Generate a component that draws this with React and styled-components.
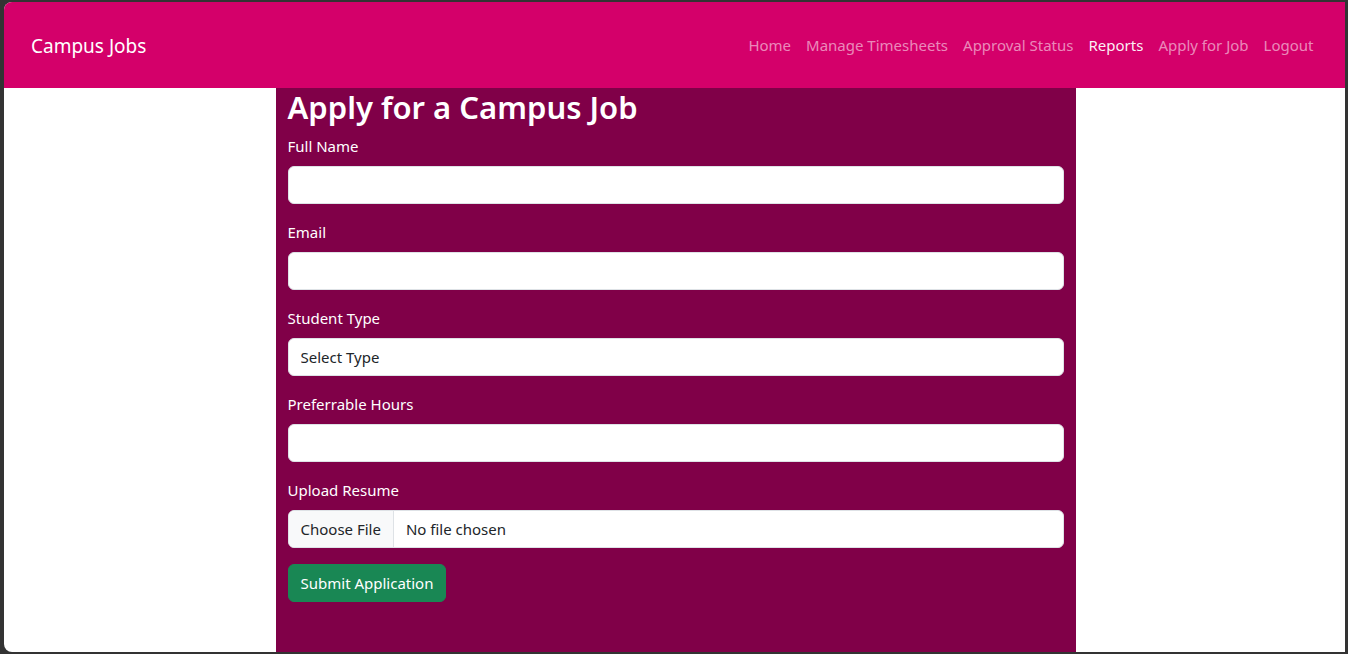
import React from "react";
import styled, { createGlobalStyle } from "styled-components";

const Global = createGlobalStyle`
  html, body { margin: 0; height: 100%; }
  body {
    background: #333;
    font-family: "Noto Sans", "Open Sans", sans-serif;
    font-size: 16px;
    color: #212529;
  }
  #root { height: 100%; }
  * { box-sizing: border-box; }
`;

const Frame = styled.div`
  height: calc(100vh - 4px);
  margin: 2px 3px 2px 4px;
  border-radius: 8px 0 0 8px;
  overflow: hidden;
  background: #fff;
  display: flex;
  flex-direction: column;
`;

const Navbar = styled.nav`
  height: 86px;
  flex: none;
  background: #d4006a;
  display: flex;
  align-items: center;
  justify-content: space-between;
  padding: 0 24px 0 27px;
`;

const Brand = styled.a`
  color: #fff;
  font-size: 19px;
  text-decoration: none;
  margin-top: 2px;
`;

const NavList = styled.ul`
  list-style: none;
  margin: 0;
  padding: 0;
  display: flex;
`;

const NavLink = styled.a`
  display: block;
  padding: 8px 7.5px;
  font-size: 15px;
  color: ${p => (p.$active ? "rgba(255,255,255,.95)" : "rgba(255,255,255,.55)")};
  text-decoration: none;
`;

const Main = styled.main`
  flex: 1;
  display: flex;
  justify-content: center;
  padding-left: 2px;
`;

const Panel = styled.div`
  width: 800px;
  background: #800048;
  padding: 0 12px;
`;

const Title = styled.h2`
  margin: 0 0 8px;
  padding-top: 1px;
  font-size: 31px;
  font-weight: 600;
  line-height: 37px;
  color: #fff;
`;

const Group = styled.div`
  margin-bottom: 16px;
`;

const Label = styled.label`
  display: block;
  color: #fff;
  font-size: 15px;
  line-height: 24px;
  margin-bottom: 8px;
`;

const Input = styled.input`
  display: block;
  width: 100%;
  height: 38px;
  padding: 6px 12px;
  font: inherit;
  font-size: 15px;
  color: #212529;
  background: #fff;
  border: 1px solid #dee2e6;
  border-radius: 6px;
  outline: none;
`;

const Select = styled.select`
  display: block;
  width: 100%;
  height: 38px;
  padding: 6px 12px;
  font: inherit;
  font-size: 15px;
  color: #212529;
  background: #fff;
  border: 1px solid #dee2e6;
  border-radius: 6px;
  appearance: none;
  outline: none;
`;

const FileBox = styled.div`
  display: flex;
  height: 38px;
  background: #fff;
  border: 1px solid #dee2e6;
  border-radius: 6px;
  overflow: hidden;
  font-size: 15px;
`;

const FileButton = styled.span`
  display: flex;
  align-items: center;
  padding: 0 12px;
  background: #f8f9fa;
  border-right: 1px solid #dee2e6;
  color: #212529;
`;

const FileName = styled.span`
  display: flex;
  align-items: center;
  padding: 0 12px;
  color: #212529;
`;

const Submit = styled.button`
  height: 38px;
  padding: 0 12px;
  font: inherit;
  font-size: 15px;
  color: #fff;
  background: #198754;
  border: 1px solid #198754;
  border-radius: 6px;
`;

const links = ["Home", "Manage Timesheets", "Approval Status", "Reports", "Apply for Job", "Logout"];

export default function App() {
  return (
    <>
      <Global />
      <Frame>
        <Navbar>
          <Brand href="#">Campus Jobs</Brand>
          <NavList>
            {links.map(l => (
              <li key={l}>
                <NavLink href="#" $active={l === "Reports"}>{l}</NavLink>
              </li>
            ))}
          </NavList>
        </Navbar>
        <Main>
          <Panel>
            <Title>Apply for a Campus Job</Title>
            <Group>
              <Label>Full Name</Label>
              <Input type="text" />
            </Group>
            <Group>
              <Label>Email</Label>
              <Input type="email" />
            </Group>
            <Group>
              <Label>Student Type</Label>
              <Select defaultValue="">
                <option value="">Select Type</option>
                <option>Undergraduate</option>
                <option>Graduate</option>
              </Select>
            </Group>
            <Group>
              <Label>Preferrable Hours</Label>
              <Input type="number" />
            </Group>
            <Group>
              <Label>Upload Resume</Label>
              <FileBox>
                <FileButton>Choose File</FileButton>
                <FileName>No file chosen</FileName>
              </FileBox>
            </Group>
            <Submit>Submit Application</Submit>
          </Panel>
        </Main>
      </Frame>
    </>
  );
}
